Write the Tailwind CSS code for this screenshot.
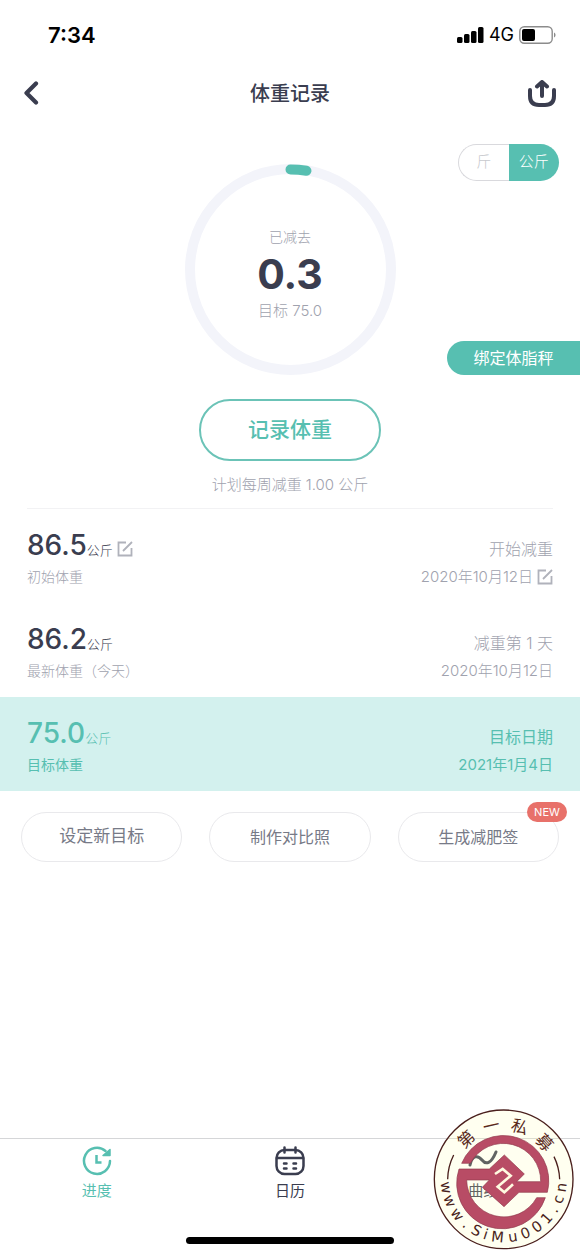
<!DOCTYPE html>
<html lang="zh-CN">
<head>
    <meta charset="UTF-8">
    <meta name="viewport" content="width=device-width, initial-scale=1.0">
    <title>体重记录</title>
    <script src="https://cdn.jsdelivr.net/npm/@tailwindcss/browser@4"></script>
    <style>
        body {
            font-family: 'Inter', 'Noto Sans CJK SC', sans-serif;
        }
    </style>
</head>
<body class="bg-white text-[#3a3d4f]">
    <div class="relative flex flex-col min-h-screen overflow-hidden">
        <!-- Status bar -->
        <div class="flex items-center justify-between h-[70px] pl-12 pr-6 text-black">
            <span class="text-[22px] font-semibold">7:34</span>
            <div class="flex items-center gap-[5px]">
                <svg class="w-[27px] h-4" viewBox="0 0 27 16" fill="currentColor" aria-hidden="true">
                    <rect x="0" y="10" width="5.500" height="6" rx="1.500"/>
                    <rect x="7" y="7" width="5.500" height="9" rx="1.500"/>
                    <rect x="14" y="4" width="5.500" height="12" rx="1.500"/>
                    <rect x="21" y="0" width="5.500" height="16" rx="1.500"/>
                </svg>
                <span class="text-lg">4G</span>
                <svg class="w-[37px] h-[18px]" viewBox="0 0 37 18" fill="none" aria-hidden="true">
                    <rect x="0.800" y="0.800" width="32.400" height="16.400" rx="4.500" stroke="#8c8c8c" stroke-width="1.400"/>
                    <rect x="3" y="3" width="13" height="12" rx="2" fill="#000"/>
                    <path d="M35 6.500c2 .8 2 4.200 0 5z" fill="#8c8c8c"/>
                </svg>
            </div>
        </div>

        <!-- Header -->
        <header class="grid grid-cols-[1fr_auto_1fr] items-center h-[46px] px-6">
            <button type="button" aria-label="返回" class="justify-self-start">
                <svg class="w-[15px] h-6" viewBox="0 0 15 24" fill="none" stroke="currentColor" stroke-width="4.200" stroke-linecap="round" stroke-linejoin="round">
                    <path d="M12 2.500L2.500 12l9.500 9.500"/>
                </svg>
            </button>
            <h1 class="pt-[2px] text-xl font-medium">体重记录</h1>
            <button type="button" aria-label="分享" class="justify-self-end">
                <svg class="w-7 h-[27px]" viewBox="0 0 28 27" fill="none" stroke="currentColor" stroke-width="4" stroke-linecap="round" stroke-linejoin="round">
                    <path d="M2 10v6q0 9 9 9h6q9 0 9-9v-6"/>
                    <path d="M14 16V2.500M9 6.500L14 2l5 4.500"/>
                </svg>
            </button>
        </header>

        <!-- Progress ring -->
        <section class="grid grid-cols-[1fr_auto_1fr] pt-7">
            <div></div>
            <div class="relative mt-5 w-[211px] h-[211px]">
                <svg class="w-full h-full" viewBox="0 0 211 211" fill="none" aria-hidden="true">
                    <circle cx="105.500" cy="105.500" r="100.500" stroke="#f3f4fa" stroke-width="10"/>
                    <path d="M105.500 5.500A100 100 0 0 1 121.500 6.800" stroke="#57bfb1" stroke-width="10" stroke-linecap="round"/>
                </svg>
                <div class="absolute inset-0 flex flex-col items-center justify-center pt-2">
                    <span class="text-sm leading-5 font-light text-[#a0a2ae]">已减去</span>
                    <span class="text-[41px] leading-[54px] font-bold">0.3</span>
                    <span class="text-[15px] leading-5 font-light text-[#a0a2ae]">目标 75.0</span>
                </div>
            </div>
            <div class="flex flex-col items-end justify-between">
                <div class="flex mr-[21px] h-[37px] w-[101px] text-[15px] font-light">
                    <button type="button" class="w-1/2 rounded-l-full border border-r-0 border-[#d9d9dd] text-[#c8c9ce]">斤</button>
                    <button type="button" class="w-1/2 rounded-r-full bg-[#57bfb1] text-white">公斤</button>
                </div>
                <button type="button" class="h-[34px] w-[133px] rounded-l-full bg-[#57bfb1] text-base text-white">绑定体脂秤</button>
            </div>
        </section>

        <div class="flex flex-col items-center mx-[27px] mt-6 pb-[11px] border-b border-[#f2f2f4]">
            <button type="button" class="h-[62px] w-[182px] rounded-full border-2 border-[#6bc3b7] text-[21px] font-medium text-[#57bfb1]">记录体重</button>
            <p class="mt-3 text-[15px] leading-6 font-light text-[#a0a2ae]">计划每周减重 1.00 公斤</p>
        </div>

        <!-- Weight rows -->
        <section class="text-sm font-light text-[#a0a2ae]">
            <div class="flex justify-between h-[94px] px-[27px] pt-[18px]">
                <div>
                    <div class="flex items-baseline h-9 leading-9 text-[#3a3d4f]">
                        <span class="text-[28px] font-medium">86.5</span>
                        <span class="text-[13px]">公斤</span>
                        <button type="button" aria-label="修改初始体重" class="ml-1 self-center pt-2 text-[#b0b2bb]">
                            <svg class="w-4 h-4" viewBox="0 0 16 16" fill="none" stroke="currentColor" stroke-width="1.800"><path d="M9 1.500H1.500v13h13V7M6 10l9-9"/></svg>
                        </button>
                    </div>
                    <div class="leading-7">初始体重</div>
                </div>
                <div class="flex flex-col items-end pt-2">
                    <div class="text-base leading-7">开始减重</div>
                    <div class="flex items-center gap-1 text-[15px] leading-7">
                        <span>2020年10月12日</span>
                        <button type="button" aria-label="修改开始日期" class="text-[#b0b2bb]">
                            <svg class="w-4 h-4" viewBox="0 0 16 16" fill="none" stroke="currentColor" stroke-width="1.800"><path d="M9 1.500H1.500v13h13V7M6 10l9-9"/></svg>
                        </button>
                    </div>
                </div>
            </div>
            <div class="flex justify-between h-[94px] px-[27px] pt-[18px]">
                <div>
                    <div class="flex items-baseline h-9 leading-9 text-[#3a3d4f]">
                        <span class="text-[28px] font-medium">86.2</span>
                        <span class="text-[13px]">公斤</span>
                    </div>
                    <div class="leading-7">最新体重（今天）</div>
                </div>
                <div class="flex flex-col items-end pt-2">
                    <div class="text-base leading-7">减重第 1 天</div>
                    <div class="text-[15px] leading-7">2020年10月12日</div>
                </div>
            </div>
            <div class="flex justify-between h-[94px] px-[27px] pt-[18px] bg-[#d3f1ee] text-[#57bfb1]">
                <div>
                    <div class="flex items-baseline h-9 leading-9">
                        <span class="text-[28px] font-medium">75.0</span>
                        <span class="text-[13px]">公斤</span>
                    </div>
                    <div class="leading-7 font-normal">目标体重</div>
                </div>
                <div class="flex flex-col items-end pt-2 font-normal">
                    <div class="text-base leading-7">目标日期</div>
                    <div class="text-[15px] leading-7">2021年1月4日</div>
                </div>
            </div>
        </section>

        <!-- Actions -->
        <section class="grid grid-cols-3 gap-[27px] px-[21px] pt-[21px] text-[#777a87]">
            <button type="button" class="h-[50px] rounded-full border border-[#e9e9ec] text-[17px]">设定新目标</button>
            <button type="button" class="h-[50px] rounded-full border border-[#e9e9ec] text-base">制作对比照</button>
            <button type="button" class="relative h-[50px] rounded-full border border-[#e9e9ec] text-base">
                生成减肥签
                <span class="absolute -top-[11px] -right-[9px] w-10 rounded-full bg-[#e8716a] text-[11px] leading-5 text-white">NEW</span>
            </button>
        </section>

        <!-- Tab bar -->
        <nav class="grid grid-cols-3 mt-auto h-[117px] border-t border-[#d5d6d8] pt-[7px] text-[15px] leading-6">
            <a href="#" class="flex flex-col items-center gap-[3px] text-[#57bfb1]">
                <svg class="w-[30px] h-[30px]" viewBox="0 0 30 30" fill="none" stroke="currentColor" stroke-width="2.500">
                    <path d="M23.500 5A13 13 0 1 0 28 15" stroke-linecap="round"/>
                    <path d="M28 3.500v6h-7z" fill="currentColor" stroke-width="1.500" stroke-linejoin="round"/>
                    <path d="M14.500 9v7.500h5"/>
                </svg>
                进度
            </a>
            <a href="#" class="flex flex-col items-center gap-[3px]">
                <svg class="w-[30px] h-[30px]" viewBox="0 0 30 30" fill="none" stroke="currentColor" stroke-width="2.500" stroke-linecap="round">
                    <rect x="1.500" y="4" width="27" height="24" rx="8"/>
                    <path d="M2 12h26M9.500 1.500v5M20.500 1.500v5"/>
                    <path d="M9 17.500h2.500M18.500 17.500H21M9 22.500h2.500M18.500 22.500H21"/>
                </svg>
                日历
            </a>
            <a href="#" class="flex flex-col items-center gap-[3px]">
                <svg class="w-[30px] h-[30px]" viewBox="0 0 30 30" fill="none" stroke="currentColor" stroke-width="3" stroke-linecap="round">
                    <path d="M2 19C4 9 10 9 14 14s9 4 14-8"/>
                </svg>
                曲线
            </a>
        </nav>
        <div class="absolute bottom-[11px] left-1/2 -translate-x-1/2 h-[7px] w-[208px] rounded-full bg-black"></div>

        <!-- Seal -->
        <svg class="absolute bottom-0 right-0 w-[155px] h-[155px]" viewBox="0 0 465 465" fill="none" role="img" aria-label="第一私募">
            <circle cx="236" cy="238" r="208" fill="#ffffb4" fill-opacity="0.200" stroke="#4a1f1c" stroke-width="4"/>
            <path d="M68 238A168 168 0 0 1 86 165M404 238A168 168 0 0 0 387 170" stroke="#4a1f1c" stroke-width="4"/>
            <path d="M110 190A136 136 0 0 1 367 277H282L237 320L172 262L193 240H125A112 112 0 0 0 335 293H361A136 136 0 0 1 102 207H193L238 165L298 222L275 245H347A112 112 0 0 0 136 190Z" fill="#b84c65" stroke="#8f3a4c" stroke-width="2" stroke-linejoin="round"/>
            <path d="M210 222L233 207L257 227L218 260L238 277L264 253" stroke="#fffbe0" stroke-width="8"/>
            <g fill="#5a2a1c" text-anchor="middle" font-size="50" font-family="'Noto Sans CJK SC', sans-serif">
                <text x="236" y="91" transform="rotate(-43 236 238)">第</text>
                <text x="236" y="91" transform="rotate(-13 236 238)">一</text>
                <text x="236" y="91" transform="rotate(17 236 238)">私</text>
                <text x="236" y="91" transform="rotate(48 236 238)">募</text>
            </g>
            <g fill="#4a1f1c" text-anchor="middle" font-size="44" font-family="'DejaVu Sans', sans-serif">
                <text x="236" y="427" transform="rotate(82 236 238)">w</text>
                <text x="236" y="427" transform="rotate(68 236 238)">w</text>
                <text x="236" y="427" transform="rotate(53 236 238)">w</text>
                <text x="236" y="427" transform="rotate(40 236 238)">.</text>
                <text x="236" y="427" transform="rotate(28 236 238)">S</text>
                <text x="236" y="427" transform="rotate(18 236 238)">i</text>
                <text x="236" y="427" transform="rotate(6 236 238)">M</text>
                <text x="236" y="427" transform="rotate(-9 236 238)">u</text>
                <text x="236" y="427" transform="rotate(-22 236 238)">0</text>
                <text x="236" y="427" transform="rotate(-35 236 238)">0</text>
                <text x="236" y="427" transform="rotate(-48 236 238)">1</text>
                <text x="236" y="427" transform="rotate(-59 236 238)">.</text>
                <text x="236" y="427" transform="rotate(-70 236 238)">c</text>
                <text x="236" y="427" transform="rotate(-82 236 238)">n</text>
            </g>
        </svg>
    </div>
</body>
</html>
